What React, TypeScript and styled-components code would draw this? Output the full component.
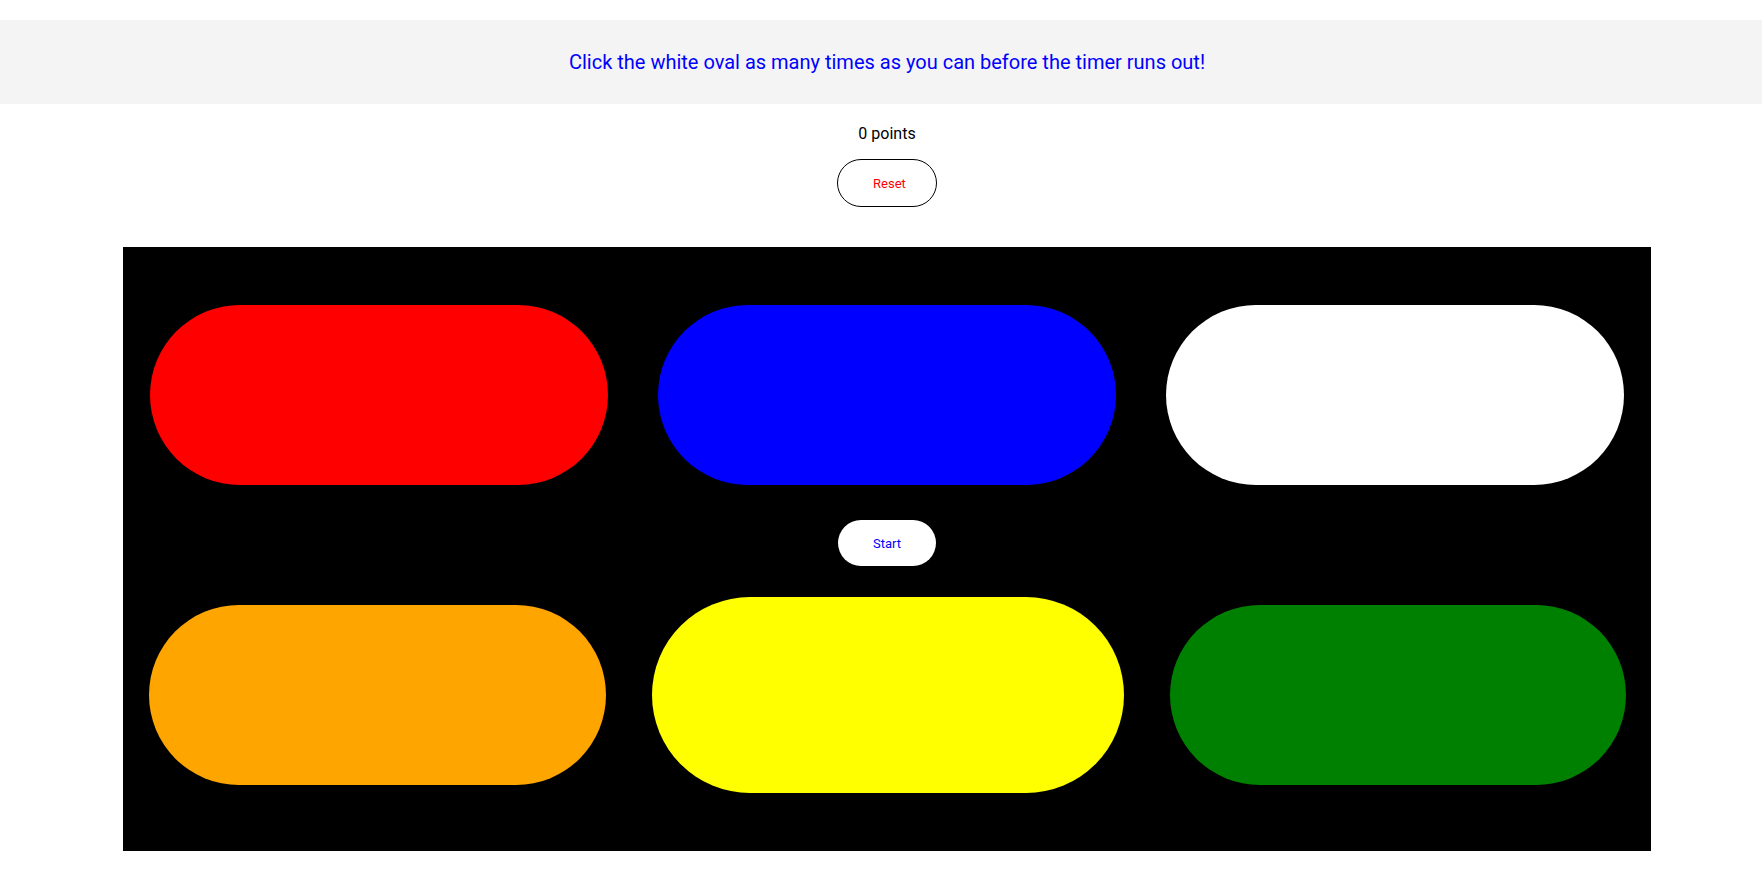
import React from "react";
import styled, { createGlobalStyle } from "styled-components";

const GlobalStyle = createGlobalStyle`
  html, body {
    margin: 0;
    padding: 0;
    background: #ffffff;
    font-family: Roboto, "Liberation Sans", Arial, sans-serif;
  }
`;

const Page = styled.div`
  display: flex;
  flex-direction: column;
  padding-top: 20px;
`;

const Header = styled.header`
  height: 84px;
  background: #f4f4f4;
  display: flex;
  align-items: center;
  justify-content: center;
  padding-left: 12px;
`;

const Instructions = styled.p`
  margin: 0;
  color: #0000ff;
  font-size: 20px;
`;

const Main = styled.main`
  display: flex;
  flex-direction: column;
  align-items: center;
  padding-left: 12px;
`;

const Score = styled.div`
  margin-top: 20px;
  font-size: 16px;
  color: #000000;
`;

const PillButton = styled.button<{ $outlined?: boolean; $textColor: string }>`
  box-sizing: border-box;
  width: ${(p) => (p.$outlined ? 100 : 98)}px;
  height: ${(p) => (p.$outlined ? 48 : 46)}px;
  border-radius: 24px;
  border: ${(p) => (p.$outlined ? "1px solid #000000" : "none")};
  background: #ffffff;
  color: ${(p) => p.$textColor};
  font-family: Roboto, "Liberation Sans", Arial, sans-serif;
  font-size: 13px;
  display: flex;
  align-items: center;
  justify-content: center;
  padding: 0 0 0 ${(p) => (p.$outlined ? 5 : 0)}px;
  cursor: pointer;
`;

const ResetButton = styled(PillButton)`
  margin-top: 16px;
`;

const StartButton = styled(PillButton)`
  margin-top: 35px;
`;

const Board = styled.section`
  box-sizing: border-box;
  margin-top: 40px;
  width: 1528px;
  height: 604px;
  background: #000000;
  padding-top: 58px;
  display: flex;
  flex-direction: column;
  align-items: center;
`;

const OvalRow = styled.div<{ $gap: number; $height: number; $offset?: number }>`
  display: flex;
  align-items: center;
  justify-content: center;
  gap: ${(p) => p.$gap}px;
  height: ${(p) => p.$height}px;
  margin-top: ${(p) => p.$offset ?? 0}px;
`;

const Oval = styled.div<{ $color: string; $w: number; $h: number }>`
  width: ${(p) => p.$w}px;
  height: ${(p) => p.$h}px;
  border-radius: ${(p) => p.$h / 2}px;
  background: ${(p) => p.$color};
  cursor: pointer;
`;

export default function App() {
  return (
    <>
      <GlobalStyle />
      <Page>
        <Header>
          <Instructions>
            Click the white oval as many times as you can before the timer runs out!
          </Instructions>
        </Header>
        <Main>
          <Score>0 points</Score>
          <ResetButton $outlined $textColor="#ff0000">
            Reset
          </ResetButton>
          <Board>
            <OvalRow $gap={50} $height={180}>
              <Oval $color="#ff0000" $w={458} $h={180} />
              <Oval $color="#0000ff" $w={458} $h={180} />
              <Oval $color="#ffffff" $w={458} $h={180} />
            </OvalRow>
            <StartButton $textColor="#0000ff">Start</StartButton>
            <OvalRow $gap={46} $height={196} $offset={31}>
              <Oval $color="#ffa500" $w={457} $h={180} />
              <Oval $color="#ffff00" $w={472} $h={196} />
              <Oval $color="#008000" $w={456} $h={180} />
            </OvalRow>
          </Board>
        </Main>
      </Page>
    </>
  );
}
